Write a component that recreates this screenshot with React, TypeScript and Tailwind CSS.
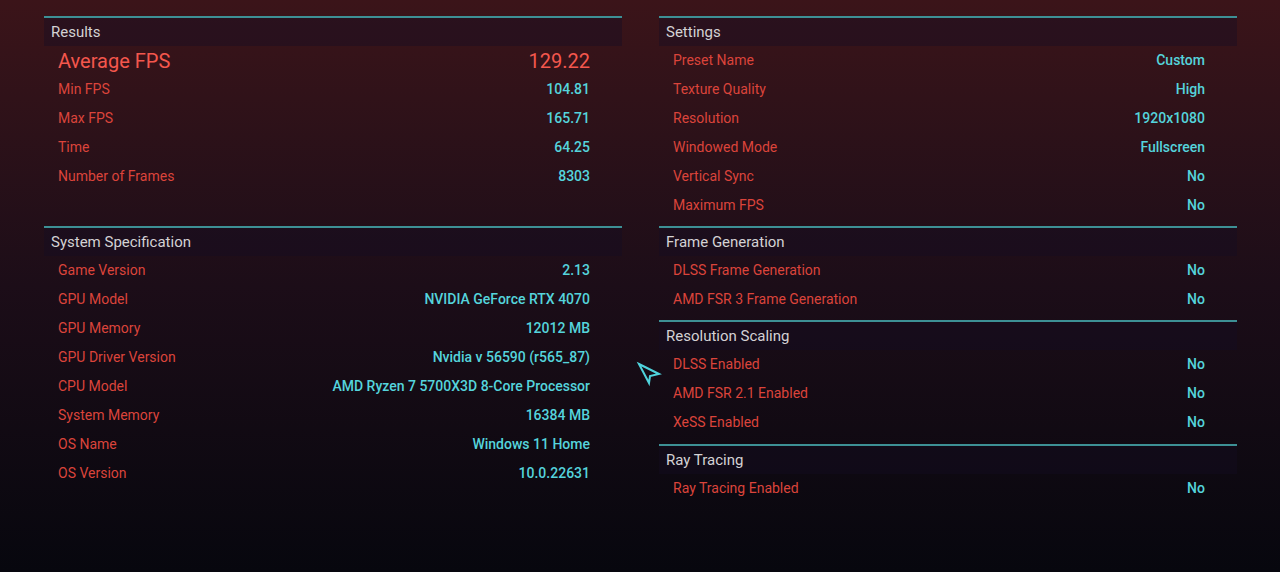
import React from "react";

type Row = { label: string; value: string };

const results: Row[] = [
    { label: "Min FPS", value: "104.81" },
    { label: "Max FPS", value: "165.71" },
    { label: "Time", value: "64.25" },
    { label: "Number of Frames", value: "8303" },
];

const systemSpec: Row[] = [
    { label: "Game Version", value: "2.13" },
    { label: "GPU Model", value: "NVIDIA GeForce RTX 4070" },
    { label: "GPU Memory", value: "12012 MB" },
    { label: "GPU Driver Version", value: "Nvidia v 56590 (r565_87)" },
    { label: "CPU Model", value: "AMD Ryzen 7 5700X3D 8-Core Processor" },
    { label: "System Memory", value: "16384 MB" },
    { label: "OS Name", value: "Windows 11 Home" },
    { label: "OS Version", value: "10.0.22631" },
];

const settings: Row[] = [
    { label: "Preset Name", value: "Custom" },
    { label: "Texture Quality", value: "High" },
    { label: "Resolution", value: "1920x1080" },
    { label: "Windowed Mode", value: "Fullscreen" },
    { label: "Vertical Sync", value: "No" },
    { label: "Maximum FPS", value: "No" },
];

const frameGen: Row[] = [
    { label: "DLSS Frame Generation", value: "No" },
    { label: "AMD FSR 3 Frame Generation", value: "No" },
];

const scaling: Row[] = [
    { label: "DLSS Enabled", value: "No" },
    { label: "AMD FSR 2.1 Enabled", value: "No" },
    { label: "XeSS Enabled", value: "No" },
];

const rayTracing: Row[] = [{ label: "Ray Tracing Enabled", value: "No" }];

const SectionHeader = ({ title }: { title: string }) => (
    <div className="border-t-2 border-[#3d9095] bg-[#150c22]/40 h-[30px] flex items-center pl-[7px] text-[15px] text-[#d4d2d4]">
        {title}
    </div>
);

const DataRow = ({ row }: { row: Row }) => (
    <div className="h-[29px] flex items-center justify-between pl-[14px] pr-[32px] text-[14px]">
        <span className="text-[#db443b]">{row.label}</span>
        <span className="text-[#55d4dc] font-medium">{row.value}</span>
    </div>
);

const Section = ({ title, rows, className = "" }: { title: string; rows: Row[]; className?: string }) => (
    <div className={className}>
        <SectionHeader title={title}/>
        {rows.map(r => <DataRow key={r.label} row={r}/>)}
    </div>
);

const Cursor = () => (
    <svg className="absolute left-[636px] top-[361px]" width="28" height="26" viewBox="0 0 28 26" fill="none">
        <path d="M3 3 L23 13 L14 15 L13 22 Z" stroke="#4fd3dc" strokeWidth="2" strokeLinejoin="miter"/>
    </svg>
);

export default function App() {
    return (
        <div
            className="relative w-[1280px] h-[572px] overflow-hidden bg-gradient-to-b from-[#3b1419] via-[#1c0d18] to-[#07070e]"
            style={{ fontFamily: "Roboto, 'Liberation Sans', sans-serif" }}
        >
            <div className="flex gap-[37px] pl-[44px] pr-[43px] pt-[16px]">
                <div className="w-[578px]">
                    <div>
                        <SectionHeader title="Results"/>
                        <div className="h-[29px] flex items-center justify-between pl-[14px] pr-[32px] text-[20px] text-[#f4574d]">
                            <span>Average FPS</span>
                            <span>129.22</span>
                        </div>
                        {results.map(r => <DataRow key={r.label} row={r}/>)}
                    </div>
                    <Section title="System Specification" rows={systemSpec} className="mt-[35px]"/>
                </div>
                <div className="w-[578px]">
                    <Section title="Settings" rows={settings}/>
                    <Section title="Frame Generation" rows={frameGen} className="mt-[6px]"/>
                    <Section title="Resolution Scaling" rows={scaling} className="mt-[6px]"/>
                    <Section title="Ray Tracing" rows={rayTracing} className="mt-[7px]"/>
                </div>
            </div>
            <Cursor/>
        </div>
    );
}
